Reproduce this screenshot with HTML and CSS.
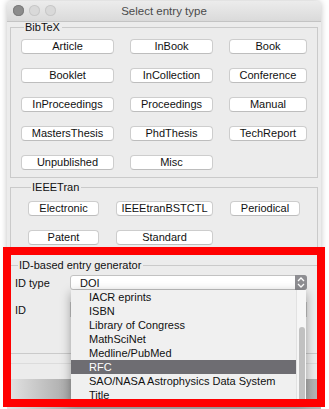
FILE: index.html
```html
<!DOCTYPE html>
<html lang="en">
<head>
    <meta charset="UTF-8">
    <title>Select entry type</title>
    <link rel="stylesheet" href="styles.css">
</head>
<body>
    <div class="window">
        <div class="titlebar">
            <div class="lights">
                <span class="light close"></span>
                <span class="light"></span>
                <span class="light"></span>
            </div>
            <div class="title">Select entry type</div>
        </div>

        <div class="content">
            <fieldset class="group bibtex">
                <legend>BibTeX</legend>
                <div class="grid grid-bibtex">
                    <button class="button">Article</button>
                    <button class="button">InBook</button>
                    <button class="button">Book</button>
                    <button class="button">Booklet</button>
                    <button class="button">InCollection</button>
                    <button class="button">Conference</button>
                    <button class="button">InProceedings</button>
                    <button class="button">Proceedings</button>
                    <button class="button">Manual</button>
                    <button class="button">MastersThesis</button>
                    <button class="button">PhdThesis</button>
                    <button class="button">TechReport</button>
                    <button class="button">Unpublished</button>
                    <button class="button">Misc</button>
                </div>
            </fieldset>

            <fieldset class="group ieee">
                <legend>IEEETran</legend>
                <div class="grid grid-ieee">
                    <button class="button">Electronic</button>
                    <button class="button">IEEEtranBSTCTL</button>
                    <button class="button">Periodical</button>
                    <button class="button">Patent</button>
                    <button class="button">Standard</button>
                </div>
            </fieldset>

            <fieldset class="group idgen">
                <legend>ID-based entry generator</legend>
                <div class="form">
                    <label class="form-label">ID type</label>
                    <div class="combo">
                        <span class="combo-value">DOI</span>
                        <span class="combo-arrow">
                            <svg width="8" height="11" viewBox="0 0 8 11">
                                <path d="M1 4 L4 1 L7 4 M1 7 L4 10 L7 7" fill="none" stroke="#fff" stroke-width="1.3"/>
                            </svg>
                        </span>
                    </div>
                    <label class="form-label">ID</label>
                    <div class="textfield"></div>
                </div>
            </fieldset>
        </div>
        <div class="footer"></div>
    </div>
    <div class="shadow"></div>

    <ul class="popup">
        <li>IACR eprints</li>
        <li>ISBN</li>
        <li>Library of Congress</li>
        <li>MathSciNet</li>
        <li>Medline/PubMed</li>
        <li class="selected">RFC</li>
        <li>SAO/NASA Astrophysics Data System</li>
        <li>Title</li>
        <div class="scrollbar"><div class="thumb"></div></div>
    </ul>

    <div class="highlight-box"></div>
</body>
</html>
```

FILE: styles.css
```css
body {
    margin: 0;
    background-color: #fff;
    font-family: "Liberation Sans", Arial, sans-serif;
    font-size: 11px;
    color: #111;
    width: 329px;
    height: 409px;
    overflow: hidden;
}
.window {
    margin: 1px 8px 0 7px;
    width: 314px;
    background-color: #ececec;
    border-radius: 5px 5px 0 0;
    box-shadow: 0 0 6px rgba(0, 0, 0, 0.25);
}
.titlebar {
    position: relative;
    height: 20px;
    display: flex;
    align-items: center;
    justify-content: center;
    background: linear-gradient(#ececec, #dadada);
    border-bottom: 1px solid #c4c4c4;
    border-radius: 5px 5px 0 0;
}
.lights {
    position: absolute;
    left: 6px;
    top: 4px;
    display: flex;
    gap: 5px;
}
.light {
    width: 11px;
    height: 11px;
    border-radius: 50%;
    background-color: #d9d9d9;
    box-shadow: inset 0 0 0 1px #c8c8c8;
}
.light.close {
    background-color: #8c8c8c;
    box-shadow: inset 0 0 0 1px #7c7c7c;
}
.title {
    font-size: 11.5px;
    color: #4a4a4a;
}
.content {
    padding: 0 3px 0 3px;
}
.group {
    margin: 0;
    border: 1px solid #cacaca;
    padding: 0;
}
.group legend {
    margin-left: 3px;
    padding: 0 2px 0 1px;
    line-height: 13px;
    font-size: 11px;
}
.bibtex {
    margin-top: -1px;
    padding: 5px 10px 7px 10px;
}
.ieee {
    margin-top: 3px;
    padding: 7px 10px 6px 17px;
    height: 59px;
}
.idgen {
    margin-top: 4px;
    padding: 3px 9px 0 4px;
    height: 90px;
}
.grid {
    display: grid;
    row-gap: 14px;
}
.grid-bibtex {
    grid-template-columns: 93px 83px 78px;
    column-gap: 16px;
    grid-auto-rows: 15px;
}
.grid-ieee {
    grid-template-columns: 71px 97px 70px;
    column-gap: 17px;
    grid-auto-rows: 15px;
}
.button {
    margin: 0;
    padding: 0;
    font-family: inherit;
    font-size: 11px;
    color: #111;
    background-color: #fff;
    border: 1px solid #cdcdcd;
    border-bottom-color: #bdbdbd;
    border-radius: 4px;
    line-height: 13px;
}
.form {
    display: grid;
    grid-template-columns: 55px 237px;
    grid-auto-rows: 15px;
    row-gap: 12px;
    align-items: center;
}
.form-label {
    font-size: 11px;
}
.combo {
    height: 15px;
    box-sizing: border-box;
    display: flex;
    align-items: center;
    justify-content: space-between;
    background-color: #fff;
    border: 1px solid #c2c2c2;
    border-radius: 3px;
}
.combo-value {
    padding-left: 9px;
}
.combo-arrow {
    width: 12px;
    height: 15px;
    margin: -1px -1px -1px 0;
    display: flex;
    align-items: center;
    justify-content: center;
    background-color: #8e8e92;
    border-radius: 0 3px 3px 0;
}
.textfield {
    height: 15px;
    box-sizing: border-box;
    background-color: #fff;
    border: 1px solid #c2c2c2;
}
.footer {
    height: 15px;
    border-top: 1px solid #dcdcdc;
    margin-top: 9px;
}
.shadow {
    margin: 0 8px 0 7px;
    height: 30px;
    background: linear-gradient(90deg, #e4e4e4, #aaaaaa 20%, #aaaaaa 85%, #b4b4b4);
}
.popup {
    position: absolute;
    left: 71px;
    top: 290px;
    width: 235px;
    height: 112px;
    margin: 0;
    padding: 0;
    list-style: none;
    background-color: #f0f0f0;
    box-shadow: 0 3px 10px rgba(0, 0, 0, 0.35);
    overflow: hidden;
}
.popup li {
    height: 14px;
    line-height: 14px;
    padding-left: 18px;
    font-size: 11px;
}
.popup li.selected {
    background-color: #6e6d72;
    color: #fff;
    margin-right: 9px;
}
.scrollbar {
    position: absolute;
    right: 0;
    top: 0;
    bottom: 0;
    width: 9px;
    background-color: #f6f6f6;
    border-left: 1px solid #e2e2e2;
}
.thumb {
    position: absolute;
    left: 2px;
    top: 37px;
    width: 6px;
    bottom: 0;
    background-color: #c1c1c1;
    border-radius: 3px;
}
.highlight-box {
    position: absolute;
    left: 3px;
    top: 247px;
    width: 306px;
    height: 144px;
    border: 8px solid #ff0000;
}
```
